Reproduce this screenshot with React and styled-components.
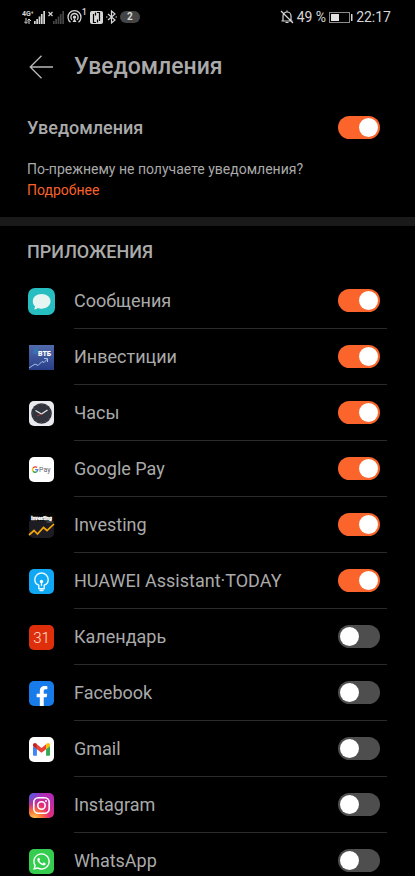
import React, { useState } from "react";
import styled, { createGlobalStyle } from "styled-components";
import { FaFacebookF, FaWhatsapp } from "react-icons/fa";

const GlobalStyle = createGlobalStyle`
  html { scrollbar-width: none; background: #000; }
  body { margin: 0; background: #000; color: #aaa; font-family: Roboto, "Noto Sans", sans-serif; }
  *, *::before, *::after { box-sizing: border-box; }
`;

const Page = styled.div`
  display: flex;
  flex-direction: column;
  width: 100%;
  background: #000;
`;

const StatusBar = styled.div`
  display: flex;
  align-items: center;
  justify-content: space-between;
  height: 34px;
  padding: 0 24px 0 22px;
  color: #d6d6d6;
  font-size: 14px;
`;

const StatusGroup = styled.div`
  display: flex;
  align-items: center;
  gap: 3px;
`;

const Network = styled.div`
  display: flex;
  align-items: flex-end;
`;

const NetworkType = styled.div`
  display: flex;
  flex-direction: column;
  align-items: center;
  font-size: 7px;
  line-height: 7px;
  font-weight: 700;
`;

const Hotspot = styled.div`
  display: flex;
  align-items: flex-start;
`;

const HotspotCount = styled.span`
  font-size: 9px;
  line-height: 4px;
  font-weight: 500;
`;

const CountPill = styled.span`
  width: 20px;
  height: 12px;
  border-radius: 6px;
  background: #444;
  font-size: 10px;
  line-height: 12px;
  font-weight: 700;
  text-align: center;
`;

const Header = styled.header`
  display: flex;
  align-items: center;
  gap: 20px;
  height: 66px;
  padding: 0 28px;
`;

const BackButton = styled.button`
  display: flex;
  padding: 0;
  border: 0;
  background: none;
  color: #b8b8b8;
  cursor: pointer;
`;

const Title = styled.h1`
  margin: 0;
  font-size: 23px;
  line-height: 32px;
  font-weight: 500;
`;

const MasterRow = styled.label`
  display: flex;
  align-items: center;
  justify-content: space-between;
  height: 54px;
  padding: 0 35px 0 27px;
  font-size: 18px;
  font-weight: 500;
`;

const Help = styled.p`
  margin: 0;
  padding: 5px 27px 16px;
  font-size: 14px;
  line-height: 21px;
`;

const HelpLink = styled.a`
  display: block;
  width: fit-content;
  color: #f9602b;
  text-decoration: none;
`;

const Band = styled.div`
  height: 9px;
  background: #1a1a1a;
`;

const SectionTitle = styled.h2`
  margin: 0;
  padding: 14px 27px 9px;
  font-size: 18px;
  line-height: 24px;
  font-weight: 500;
`;

const AppList = styled.ul`
  margin: 0;
  padding: 0 28px;
  list-style: none;
`;

const AppItem = styled.li`
  display: flex;
  align-items: center;
  gap: 19px;
  height: 56px;
`;

const AppLabel = styled.label`
  display: flex;
  flex: 1;
  align-items: center;
  justify-content: space-between;
  height: 100%;
  padding-right: 7px;
  border-bottom: 1px solid #2b2b2b;
  font-size: 18px;
`;

const AppIcon = styled.svg`
  flex: none;
  width: 27px;
  height: 27px;
`;

const Switch = styled.input.attrs({ type: "checkbox", role: "switch" })`
  appearance: none;
  flex: none;
  display: flex;
  width: 42px;
  height: 23px;
  margin: 0;
  padding: 2px;
  border-radius: 12px;
  background: #4e4e4e;
  cursor: pointer;

  &::before {
    content: "";
    width: 19px;
    height: 19px;
    border-radius: 50%;
    background: #fff;
  }
  &:checked { background: #fb652b; justify-content: flex-end; }
`;

const Bars = ({ color }) => (
  <svg width="11" height="13" viewBox="0 0 13 13" preserveAspectRatio="none" fill={color} aria-hidden="true">
    <path d="M0 10h2v3H0zM2.700 8h2v5h-2zM5.500 5.500h2V13h-2zM8.200 3h2v10h-2zM11 0h2v13h-2z" />
  </svg>
);

function MessagesIcon() {
  return (
    <>
      <rect width="27" height="27" rx="7" fill="#27bec2" />
      <path d="M13.500 6c5.200 0 9 3 9 7.300s-3.800 7.400-9 7.400c-1.600 0-2.500-.2-3.600-.7-1 .9-2.300 1.400-4 1.300.8-.8 1.200-1.800 1-3C5.500 17 4.800 15.300 4.800 13.300 4.800 9 8.500 6 13.500 6Z" fill="#e6f5f2" />
    </>
  );
}

function VtbIcon() {
  return (
    <>
      <defs>
        <linearGradient id="vtb" x1="0" y1="0" x2="0" y2="1">
          <stop stopColor="#526bac" /><stop offset="1" stopColor="#283d87" />
        </linearGradient>
      </defs>
      <rect x="1" y="1" width="25" height="25" fill="url(#vtb)" />
      <path d="M6 5h4M5.500 7h4M5 9h4" stroke="#2685c6" strokeWidth="1" />
      <text x="10" y="12" fill="#fff" fontSize="7" fontWeight="900">ВТБ</text>
      <path d="m1 24 6-4 3 1.500 4-4 2 1 3.500-3.500M16 14.500h3.500V18" fill="none" stroke="#a9bfeb" />
    </>
  );
}

function ClockIcon() {
  return (
    <>
      <rect x="1" y="1" width="25" height="25" rx="5" fill="#e9e9ee" />
      <circle cx="13.500" cy="13.500" r="10.300" fill="#31343d" />
      <circle cx="13.500" cy="13.500" r="9" fill="none" stroke="#777b86" strokeWidth="1" strokeDasharray=".6 4.110" />
      <path d="m7.500 10.500 6 3.500 6-4" fill="none" stroke="#e8e8ea" strokeWidth="1.200" />
      <path d="m9 16 5-2" stroke="#c03539" strokeWidth=".8" />
    </>
  );
}

function GooglePayIcon() {
  return (
    <>
      <rect x="1" y="1" width="25" height="25" rx="5" fill="#fff" />
      <g fill="none" strokeWidth="1.400">
        <path d="M9.100 11.600A2.600 2.600 0 0 0 5.100 12" stroke="#ea4335" />
        <path d="M5.100 12a2.600 2.600 0 0 0 0 3.200" stroke="#fbbc04" />
        <path d="M5.100 15.200a2.600 2.600 0 0 0 3.800.3" stroke="#34a853" />
        <path d="M8.900 15.500a2.600 2.600 0 0 0 .9-1.900H7.200" stroke="#4285f4" />
      </g>
      <text x="11" y="16" fill="#5f6368" fontSize="7" fontWeight="400">Pay</text>
    </>
  );
}

function InvestingIcon() {
  return (
    <>
      <rect x="1" y="1" width="25" height="25" rx="5" fill="#1c1c22" />
      <rect x="1" y="1" width="25" height="8" fill="#050505" />
      <text x="3" y="8" fill="#fff" stroke="#fff" strokeWidth=".3" fontSize="5" fontWeight="900">Investing</text>
      <text x="18" y="11" fill="#777" fontSize="3">.com</text>
      <path d="m1 23 5-4.500 3.500 3.500 6-6.500 3.500 3L26 12" fill="none" stroke="#f5a70d" strokeWidth="1.700" />
    </>
  );
}

function AssistantIcon() {
  return (
    <>
      <rect x="1" y="1" width="25" height="25" rx="5" fill="#10a8f4" />
      <g fill="none" stroke="#e6f8ff" strokeWidth="1.400" strokeLinecap="round" strokeLinejoin="round">
        <path d="M10.800 20.800v-3.600c-2.600-1-4-3-4-5.500a6.700 6.700 0 0 1 13.400 0c0 2.500-1.400 4.500-4 5.500v3.600ZM12 22.500h3M13.500 14v3.500" />
      </g>
      <circle cx="13.500" cy="13.500" r="1.700" fill="#fff" />
    </>
  );
}

function CalendarIcon() {
  return (
    <>
      <rect x="1" y="1" width="25" height="25" rx="5" fill="#df2e0b" />
      <text x="13.500" y="19" fill="#ffe4da" fontSize="15" fontWeight="300" textAnchor="middle">31</text>
    </>
  );
}

function FacebookIcon() {
  return (
    <>
      <rect x="1" y="1" width="25" height="25" rx="5" fill="#187bea" />
      <FaFacebookF x="4" y="6" size="20" color="#fff" />
    </>
  );
}

function GmailIcon() {
  return (
    <>
      <rect x="1" y="1" width="25" height="25" rx="5" fill="#fff" />
      <path d="M5 10v8.700c0 .7.500 1.100 1.100 1.100h2.800v-7Z" fill="#4285f4" />
      <path d="M22 10v8.700c0 .7-.5 1.100-1.100 1.100h-2.800v-7Z" fill="#34a853" />
      <path d="m8.900 8.300 4.600 3.600 4.600-3.600v4.900l-4.600 3.600-4.600-3.600Z" fill="#ea4335" />
      <path d="M5 10V9c0-2 2-2.600 3.300-1.400l.6.500v5.100Z" fill="#c5221f" />
      <path d="M22 10V9c0-2-2-2.600-3.300-1.400l-.6.500v5.100Z" fill="#fbbc04" />
    </>
  );
}

function InstagramIcon() {
  return (
    <>
      <defs>
        <radialGradient id="ig-warm" cx=".2" cy="1.050" r="1.050">
          <stop stopColor="#ffd35a" /><stop offset=".3" stopColor="#fb7636" />
          <stop offset=".6" stopColor="#e42c76" /><stop offset="1" stopColor="#b52ab5" />
        </radialGradient>
        <radialGradient id="ig-cool" cx="0" cy="0" r=".65">
          <stop stopColor="#3869ed" /><stop offset="1" stopColor="#7040dc" stopOpacity="0" />
        </radialGradient>
      </defs>
      <rect x="1" y="1" width="25" height="25" rx="5" fill="url(#ig-warm)" />
      <rect x="1" y="1" width="25" height="25" rx="5" fill="url(#ig-cool)" />
      <g fill="none" stroke="#fff" strokeWidth="1.600">
        <rect x="5.800" y="5.800" width="15.400" height="15.400" rx="4.500" />
        <circle cx="13.500" cy="13.500" r="3.700" />
      </g>
      <circle cx="18" cy="9" r="1" fill="#fff" />
    </>
  );
}

function WhatsAppIcon() {
  return (
    <>
      <rect x="1" y="1" width="25" height="25" rx="5" fill="#35cd50" />
      <FaWhatsapp x="4" y="4" size="19" color="#fff" />
    </>
  );
}

const APPS = [
  { name: "Сообщения", Icon: MessagesIcon, on: true },
  { name: "Инвестиции", Icon: VtbIcon, on: true },
  { name: "Часы", Icon: ClockIcon, on: true },
  { name: "Google Pay", Icon: GooglePayIcon, on: true },
  { name: "Investing", Icon: InvestingIcon, on: true },
  { name: "HUAWEI Assistant·TODAY", Icon: AssistantIcon, on: true },
  { name: "Календарь", Icon: CalendarIcon, on: false },
  { name: "Facebook", Icon: FacebookIcon, on: false },
  { name: "Gmail", Icon: GmailIcon, on: false },
  { name: "Instagram", Icon: InstagramIcon, on: false },
  { name: "WhatsApp", Icon: WhatsAppIcon, on: false },
];

function AppRow({ name, Icon, on }) {
  const [checked, setChecked] = useState(on);
  return (
    <AppItem>
      <AppIcon viewBox="0 0 27 27" aria-hidden="true"><Icon /></AppIcon>
      <AppLabel>
        {name}
        <Switch checked={checked} onChange={(e) => setChecked(e.target.checked)} />
      </AppLabel>
    </AppItem>
  );
}

function PhoneStatus() {
  return (
    <StatusBar>
      <StatusGroup>
        <Network>
          <NetworkType>
            4G⁺
            <svg width="7" height="6" viewBox="0 0 7 6" fill="none" stroke="currentColor" aria-hidden="true">
              <path d="M2 0v5M0 3.500l2 2 2-2M5 6V1M3.500 2.500 5 1l2 2" />
            </svg>
          </NetworkType>
          <Bars color="#d6d6d6" />
        </Network>
        <Network>
          <svg width="5" height="13" viewBox="0 0 5 13" stroke="currentColor" strokeWidth="1.200" aria-hidden="true">
            <path d="m.5 1 4 4M4.500 1l-4 4" />
          </svg>
          <Bars color="#454545" />
        </Network>
        <Hotspot>
          <svg width="15" height="14" viewBox="0 0 15 14" fill="none" stroke="currentColor" strokeWidth="1.300" aria-hidden="true">
            <path d="M3.500 12.300a6.500 6.500 0 1 1 8 0M5 9.700a3.600 3.600 0 1 1 5 0" />
            <circle cx="7.500" cy="7.200" r="1" fill="currentColor" />
            <path d="M7.500 8.500 5.500 12h4Z" fill="currentColor" stroke="none" />
          </svg>
          <HotspotCount>1</HotspotCount>
        </Hotspot>
        <svg width="13" height="13" viewBox="0 0 13 13" aria-hidden="true">
          <rect width="13" height="13" rx="2" fill="#d6d6d6" />
          <path d="M3.500 3v8.500H6M9.500 10V1.500H7M5.500 4.500v-3M7.500 8.500v3" fill="none" stroke="#000" strokeWidth="1.200" />
        </svg>
        <svg width="11" height="14" viewBox="0 0 11 14" fill="none" stroke="currentColor" strokeWidth="1.200" aria-hidden="true">
          <path d="m2 4 7 6-3.500 3V1L9 4l-7 6" />
          <path d="M0 7h1.500M9.500 7H11" />
        </svg>
        <CountPill>2</CountPill>
      </StatusGroup>
      <StatusGroup>
        <svg width="14" height="14" viewBox="0 0 14 14" fill="none" stroke="currentColor" strokeWidth="1.200" aria-hidden="true">
          <path d="M1.500 11h11M3 11V6a4 4 0 0 1 8 0v5M7 2V.5M5.500 12.500h3M1 1l12 12" />
        </svg>
        <span>49 %</span>
        <svg width="24" height="11" viewBox="0 0 24 11" aria-hidden="true">
          <rect x=".5" y=".5" width="20" height="10" fill="none" stroke="#8b8b8b" />
          <rect x="2" y="2" width="8" height="7" fill="#e2e2e2" />
          <rect x="22" y="2" width="1.500" height="7" fill="#d6d6d6" />
        </svg>
        <span>22:17</span>
      </StatusGroup>
    </StatusBar>
  );
}

export default function App() {
  const [enabled, setEnabled] = useState(true);
  return (
    <>
      <GlobalStyle />
      <Page>
        <PhoneStatus />
        <Header>
          <BackButton aria-label="Назад">
            <svg width="26" height="24" viewBox="0 0 26 24" fill="none" stroke="currentColor" strokeWidth="1.300" aria-hidden="true">
              <path d="M25 12H2M13.500.7 2.200 12l11.300 11.300" />
            </svg>
          </BackButton>
          <Title>Уведомления</Title>
        </Header>
        <main>
          <MasterRow>
            Уведомления
            <Switch checked={enabled} onChange={(e) => setEnabled(e.target.checked)} />
          </MasterRow>
          <Help>
            По-прежнему не получаете уведомления?
            <HelpLink href="#help">Подробнее</HelpLink>
          </Help>
          <Band />
          <SectionTitle>ПРИЛОЖЕНИЯ</SectionTitle>
          <AppList>
            {APPS.map((app) => <AppRow key={app.name} {...app} />)}
          </AppList>
        </main>
      </Page>
    </>
  );
}
